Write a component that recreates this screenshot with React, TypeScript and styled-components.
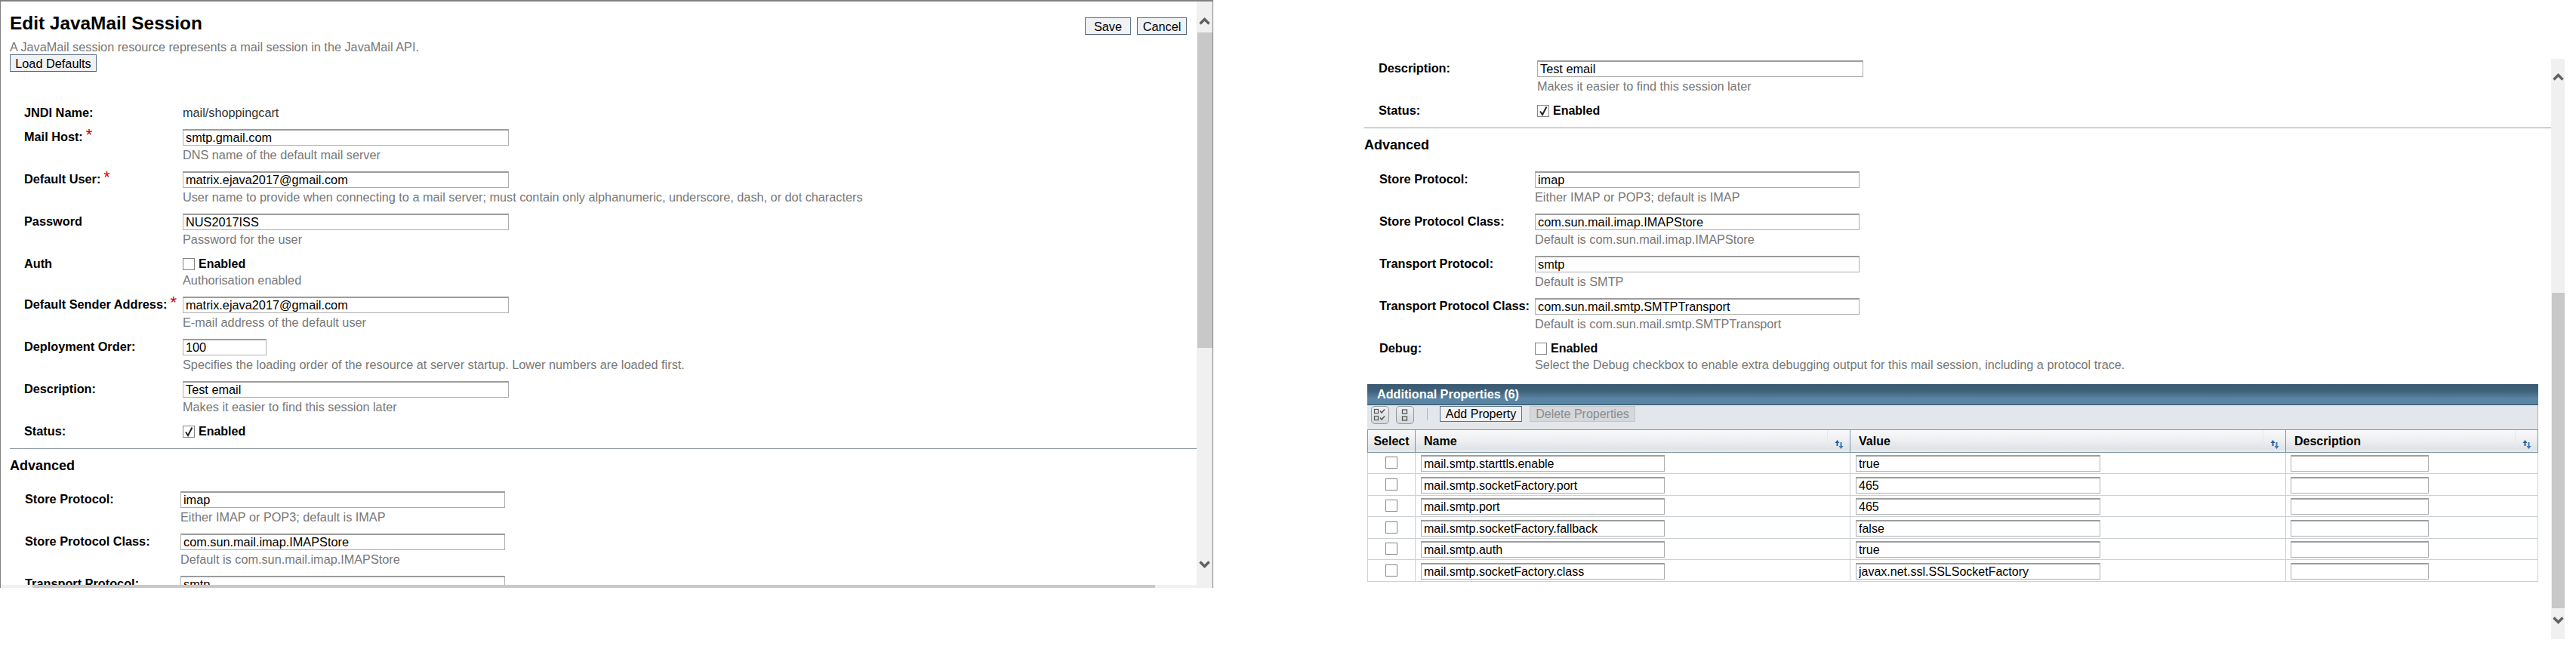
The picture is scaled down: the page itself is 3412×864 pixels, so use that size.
import React from 'react'
import styled, { createGlobalStyle } from 'styled-components'

const GlobalStyle = createGlobalStyle`
  html, body {
    margin: 0;
    padding: 0;
    background: #fff;
    font-family: "Liberation Sans", Arial, sans-serif;
    font-size: 16px;
    color: #000;
  }
`

const Page = styled.div`
  display: flex;
  width: 3412px;
  height: 864px;
  overflow: hidden;
  align-items: flex-start;
`

const LeftPanel = styled.div`
  display: flex;
  box-sizing: border-box;
  width: 1607px;
  height: 779px;
  border-top: 2px solid #808080;
  border-left: 1px solid #808080;
  border-right: 1px solid #808080;
`

const LeftColumn = styled.div`
  display: flex;
  flex-direction: column;
  flex: 1;
  min-width: 0;
`

const Viewport = styled.div`
  flex: 1;
  min-height: 0;
  overflow: hidden;
  padding: 15px 0 0 12px;
`

const HScroll = styled.div`
  display: flex;
  flex: 0 0 4px;
  background: #f0f0f0;
`

const HThumb = styled.div`
  width: 1487px;
  margin-left: 42px;
  background: #c8c8c8;
`

const VScroll = styled.div<{ $width: number; $top?: number; $h?: number; $stacked?: boolean }>`
  display: flex;
  flex-direction: column;
  justify-content: ${p => (p.$stacked ? 'flex-start' : 'space-between')};
  flex: 0 0 ${p => p.$width}px;
  height: ${p => (p.$h ? `${p.$h}px` : 'auto')};
  background: #f0f0f0;
  margin-top: ${p => p.$top || 0}px;
`

const ScrollGroup = styled.div`
  display: flex;
  flex-direction: column;
`

const ScrollBtn = styled.div<{ $h: number; $pad: number }>`
  display: flex;
  justify-content: center;
  align-items: flex-start;
  box-sizing: border-box;
  height: ${p => p.$h}px;
  padding-top: ${p => p.$pad}px;
`

const Thumb = styled.div<{ $mt?: number }>`
  height: 418px;
  margin: ${p => p.$mt || 0}px 0 0 1px;
  background: #c8c8c8;
`

const RightPanel = styled.div`
  display: flex;
  height: 864px;
  margin-left: 200px;
`

const RightContent = styled.div`
  width: 1572px;
  padding-top: 80px;
`

const HeaderRow = styled.div`
  display: flex;
  justify-content: space-between;
  height: 35px;
  padding-right: 13px;
`

const Title = styled.h1`
  margin: 0;
  font-size: 24.4px;
  line-height: 28px;
  font-weight: bold;
`

const HeaderButtons = styled.div`
  display: flex;
  gap: 8px;
  padding-top: 6px;
`

const Button = styled.button<{ $width: number }>`
  box-sizing: border-box;
  width: ${p => p.$width}px;
  height: 23px;
  padding: 0;
  border: 1px solid #5a7089;
  border-bottom-color: #44586f;
  border-radius: 0;
  background: #f0f1f3;
  color: #000;
  font: 16.3px/20px "Liberation Sans", Arial, sans-serif;
`

const Subtitle = styled.p`
  margin: 0;
  font-size: 16.25px;
  line-height: 20px;
  color: #777;
`

const FormRow = styled.div<{ $h?: number; $advanced?: boolean }>`
  display: grid;
  grid-template-columns: ${p => (p.$advanced ? 206 : 210)}px 1fr;
  height: ${p => p.$h || 56}px;
  padding-left: ${p => (p.$advanced ? 20 : 19)}px;
`

const FirstRow = styled(FormRow)`
  margin-top: 44px;
`

const Label = styled.div`
  font-size: 16.3px;
  font-weight: bold;
  line-height: 20px;
  white-space: nowrap;
`

const Required = styled.sup`
  color: #c00;
  font-size: 22px;
  font-weight: normal;
  line-height: 0;
  margin-left: 4px;
  vertical-align: 1px;
`

const Static = styled.div`
  font-size: 16.25px;
  line-height: 20px;
  color: #333;
`

const Field = styled.input<{ $width?: number; $compact?: boolean }>`
  display: block;
  box-sizing: border-box;
  width: ${p => p.$width || 432}px;
  height: 22px;
  padding: 0 3px;
  border: 1px solid #aeaeae;
  border-top: 2px solid #9c9c9c;
  border-radius: 0;
  outline: none;
  background: #fff;
  color: #000;
  font: ${p => (p.$compact ? 16 : 16.3)}px "Liberation Sans", Arial, sans-serif;
`

const Help = styled.div<{ $mt?: number }>`
  margin-top: ${p => p.$mt ?? 2}px;
  font-size: 16.25px;
  line-height: 20px;
  color: #777;
  white-space: nowrap;
`

const CheckLine = styled.label`
  display: flex;
  align-items: center;
  gap: 5px;
  height: 22px;
  font-weight: bold;
`

const CheckBox = styled.span<{ $size?: number }>`
  display: inline-flex;
  align-items: center;
  justify-content: center;
  box-sizing: border-box;
  width: ${p => p.$size || 16}px;
  height: ${p => p.$size || 16}px;
  border: 1px solid #858585;
  background: #fff;
`

const Divider = styled.hr`
  height: 1px;
  margin: 11px 0 10px;
  border: 0;
  background: #8d9aa3;
`

const SectionTitle = styled.h2<{ $mb: number }>`
  margin: 0 0 ${p => p.$mb}px;
  font-size: 18px;
  line-height: 24px;
  font-weight: bold;
`

const TableBox = styled.div`
  width: 1551px;
  margin: 4px 0 0 4px;
`

const TableTitle = styled.div`
  box-sizing: border-box;
  height: 28px;
  padding-left: 13px;
  border-bottom: 1px solid #2f4f63;
  background: linear-gradient(#395a71 0%, #3f6179 35%, #5a84a4 70%, #5a84a4 100%);
  color: #fff;
  font-size: 16.2px;
  font-weight: bold;
  line-height: 26px;
`

const Toolbar = styled.div`
  display: flex;
  align-items: flex-start;
  box-sizing: border-box;
  height: 32px;
  padding: 1px 0 0 5px;
  border-right: 1px solid #a9b4bc;
  background: #e3e6ea;
`

const IconBtn = styled.div`
  display: flex;
  align-items: center;
  justify-content: center;
  box-sizing: border-box;
  width: 24px;
  height: 24px;
  margin-right: 9px;
  border: 1px solid #8f979e;
  border-radius: 5px;
  background: linear-gradient(#eef0f2, #d5d8dc);
`

const ToolSep = styled.div`
  width: 1px;
  height: 16px;
  margin: 3px 16px 0 8px;
  background: #b0b6bc;
`

const ToolButton = styled.button<{ $width: number; $off?: boolean }>`
  box-sizing: border-box;
  width: ${p => p.$width}px;
  height: 21px;
  margin-right: 10px;
  padding: 0;
  border: 1px solid ${p => (p.$off ? '#c3c6c9' : '#5a7089')};
  border-radius: 0;
  background: ${p => (p.$off ? '#d5d7da' : '#f0f1f3')};
  color: ${p => (p.$off ? '#8a8d90' : '#000')};
  font: 16px/18px "Liberation Sans", Arial, sans-serif;
`

const Table = styled.table`
  width: 1551px;
  table-layout: fixed;
  border-collapse: separate;
  border-spacing: 0;
`

const HeadCell = styled.th<{ $width: number }>`
  box-sizing: border-box;
  width: ${p => p.$width}px;
  height: 31px;
  padding: 0;
  border-top: 1px solid #7d97a5;
  border-bottom: 1px solid #7d97a5;
  border-left: 1px solid #7d97a5;
  background: linear-gradient(#f9f9fa, #eceef0 50%, #e0e3e7 85%, #e8eaed);
  font-size: 16px;
  font-weight: bold;
  text-align: left;
  &:last-child {
    border-right: 1px solid #7d97a5;
  }
`

const HeadInner = styled.div<{ $center?: boolean }>`
  display: flex;
  align-items: stretch;
  justify-content: ${p => (p.$center ? 'center' : 'space-between')};
  height: 29px;
  line-height: 30px;
  padding-left: ${p => (p.$center ? 0 : 11)}px;
`

const SortBtn = styled.div`
  display: flex;
  align-items: flex-end;
  justify-content: center;
  box-sizing: border-box;
  width: 30px;
  padding-bottom: 3px;
  border-left: 1px solid #e6e8eb;
`

const BodyRow = styled.tr`
  &:nth-child(even) td {
    height: 29px;
  }
`

const Cell = styled.td`
  box-sizing: border-box;
  height: 28px;
  padding: 3px 0 0 7px;
  border-left: 1px solid #c9d0d6;
  border-bottom: 1px solid #c9d0d6;
  vertical-align: top;
  tr:nth-child(even) > & {
    padding-top: 4px;
  }
  &:last-child {
    padding-left: 6px;
    border-right: 1px solid #c9d0d6;
  }
`

const SelectCell = styled(Cell)`
  padding: 5px 0 0 23px;
  tr:nth-child(even) > & {
    padding-top: 6px;
  }
`

const Chevron = ({ down, width = 15 }: { down?: boolean; width?: number }) => (
  <svg width={width} height="12" viewBox="0 0 15 12">
    <path d={down ? 'M1.5 2.5 7.5 8.5 13.5 2.5' : 'M1.5 9.5 7.5 3.5 13.5 9.5'} fill="none" stroke="#606060" strokeWidth="3.4" />
  </svg>
)

const CheckMark = () => (
  <svg width="14" height="14" viewBox="0 0 14 14">
    <path d="M3 7.5 6 12 11.5 1.5" fill="none" stroke="#222" strokeWidth="2" />
  </svg>
)

const SortIcon = () => (
  <svg width="12" height="14" viewBox="0 0 12 14">
    <path d="M3.5 1 6.5 5H4.5V9H2.5V5H.5Z" fill="#2a5f9e" />
    <path d="M8.5 13 5.5 9H7.5V4H9.5V9H11.5Z" fill="#3f78b5" />
  </svg>
)

const SelectAllIcon = () => (
  <svg width="18" height="18" viewBox="0 0 18 18" fill="none" stroke="#555" strokeWidth="1.2">
    <rect x="1.5" y="1.5" width="5" height="5" />
    <rect x="1.5" y="10.5" width="5" height="5" />
    <path d="M9 3.5 11 6 15 1.5M9 12.5 11 15 15 10.5" strokeWidth="1.5" />
  </svg>
)

const DeselectIcon = () => (
  <svg width="10" height="18" viewBox="0 0 10 18" fill="none" stroke="#555" strokeWidth="1.3">
    <rect x="1.5" y="2" width="6" height="5" />
    <rect x="1.5" y="11" width="6" height="5" />
  </svg>
)

const properties = [
  ['mail.smtp.starttls.enable', 'true'],
  ['mail.smtp.socketFactory.port', '465'],
  ['mail.smtp.port', '465'],
  ['mail.smtp.socketFactory.fallback', 'false'],
  ['mail.smtp.auth', 'true'],
  ['mail.smtp.socketFactory.class', 'javax.net.ssl.SSLSocketFactory'],
]

function Row({ label, required, value, help, width, advanced }: {
  label: string
  required?: boolean
  value: string
  help: string
  width?: number
  advanced?: boolean
}) {
  return (
    <FormRow $advanced={advanced}>
      <Label>
        {label}
        {required && <Required>*</Required>}
      </Label>
      <div>
        <Field readOnly value={value} $width={width} />
        <Help>{help}</Help>
      </div>
    </FormRow>
  )
}

function CheckRow({ label, checked, help, advanced }: { label: string; checked?: boolean; help?: string; advanced?: boolean }) {
  return (
    <FormRow $advanced={advanced} $h={help ? 54 : 22}>
      <Label>{label}</Label>
      <div>
        <CheckLine>
          <CheckBox>{checked && <CheckMark />}</CheckBox>
          Enabled
        </CheckLine>
        {help && <Help $mt={0}>{help}</Help>}
      </div>
    </FormRow>
  )
}

function DescriptionAndStatus({ titleGap }: { titleGap: number }) {
  return (
    <>
      <Row label="Description:" value="Test email" help="Makes it easier to find this session later" />
      <CheckRow label="Status:" checked />
      <Divider />
      <SectionTitle $mb={titleGap}>Advanced</SectionTitle>
    </>
  )
}

export default function App() {
  return (
    <Page>
      <GlobalStyle />
      <LeftPanel>
        <LeftColumn>
          <Viewport>
            <HeaderRow>
              <Title>Edit JavaMail Session</Title>
              <HeaderButtons>
                <Button $width={61}>Save</Button>
                <Button $width={66}>Cancel</Button>
              </HeaderButtons>
            </HeaderRow>
            <Subtitle>A JavaMail session resource represents a mail session in the JavaMail API.</Subtitle>
            <Button $width={115}>Load Defaults</Button>
            <FirstRow $h={32}>
              <Label>JNDI Name:</Label>
              <Static>mail/shoppingcart</Static>
            </FirstRow>
            <Row label="Mail Host:" required value="smtp.gmail.com" help="DNS name of the default mail server" />
            <Row label="Default User:" required value="matrix.ejava2017@gmail.com" help="User name to provide when connecting to a mail server; must contain only alphanumeric, underscore, dash, or dot characters" />
            <Row label="Password" value="NUS2017ISS" help="Password for the user" />
            <CheckRow label="Auth" help="Authorisation enabled" />
            <Row label="Default Sender Address:" required value="matrix.ejava2017@gmail.com" help="E-mail address of the default user" />
            <Row label="Deployment Order:" value="100" width={111} help="Specifies the loading order of the resource at server startup. Lower numbers are loaded first." />
            <DescriptionAndStatus titleGap={22} />
            <Row advanced label="Store Protocol:" value="imap" help="Either IMAP or POP3; default is IMAP" width={430} />
            <Row advanced label="Store Protocol Class:" value="com.sun.mail.imap.IMAPStore" help="Default is com.sun.mail.imap.IMAPStore" width={430} />
            <Row advanced label="Transport Protocol:" value="smtp" help="Default is SMTP" width={430} />
          </Viewport>
          <HScroll>
            <HThumb />
          </HScroll>
        </LeftColumn>
        <VScroll $width={21}>
          <ScrollGroup>
            <ScrollBtn $h={41} $pad={20}><Chevron /></ScrollBtn>
            <Thumb />
          </ScrollGroup>
          <ScrollBtn $h={58} $pad={21}><Chevron down /></ScrollBtn>
        </VScroll>
      </LeftPanel>

      <RightPanel>
        <RightContent>
          <DescriptionAndStatus titleGap={23} />
          <Row advanced label="Store Protocol:" value="imap" help="Either IMAP or POP3; default is IMAP" width={430} />
          <Row advanced label="Store Protocol Class:" value="com.sun.mail.imap.IMAPStore" help="Default is com.sun.mail.imap.IMAPStore" width={430} />
          <Row advanced label="Transport Protocol:" value="smtp" help="Default is SMTP" width={430} />
          <Row advanced label="Transport Protocol Class:" value="com.sun.mail.smtp.SMTPTransport" help="Default is com.sun.mail.smtp.SMTPTransport" width={430} />
          <CheckRow advanced label="Debug:" help="Select the Debug checkbox to enable extra debugging output for this mail session, including a protocol trace." />
          <TableBox>
            <TableTitle>Additional Properties (6)</TableTitle>
            <Toolbar>
              <IconBtn><SelectAllIcon /></IconBtn>
              <IconBtn><DeselectIcon /></IconBtn>
              <ToolSep />
              <ToolButton $width={109}>Add Property</ToolButton>
              <ToolButton $width={140} $off>Delete Properties</ToolButton>
            </Toolbar>
            <Table>
              <thead>
                <tr>
                  <HeadCell $width={63}><HeadInner $center>Select</HeadInner></HeadCell>
                  <HeadCell $width={576}><HeadInner>Name<SortBtn><SortIcon /></SortBtn></HeadInner></HeadCell>
                  <HeadCell $width={577}><HeadInner>Value<SortBtn><SortIcon /></SortBtn></HeadInner></HeadCell>
                  <HeadCell $width={335}><HeadInner>Description<SortBtn><SortIcon /></SortBtn></HeadInner></HeadCell>
                </tr>
              </thead>
              <tbody>
                {properties.map(([name, value]) => (
                  <BodyRow key={name}>
                    <SelectCell><CheckBox /></SelectCell>
                    <Cell><Field readOnly value={name} $width={323} $compact /></Cell>
                    <Cell><Field readOnly value={value} $width={324} $compact /></Cell>
                    <Cell><Field readOnly value="" $width={183} $compact /></Cell>
                  </BodyRow>
                ))}
              </tbody>
            </Table>
          </TableBox>
        </RightContent>
        <VScroll $width={18} $top={78} $h={769} $stacked>
          <ScrollBtn $h={48} $pad={18}><Chevron /></ScrollBtn>
          <Thumb $mt={262} />
          <ScrollBtn $h={41} $pad={10}><Chevron down /></ScrollBtn>
        </VScroll>
      </RightPanel>
    </Page>
  )
}
